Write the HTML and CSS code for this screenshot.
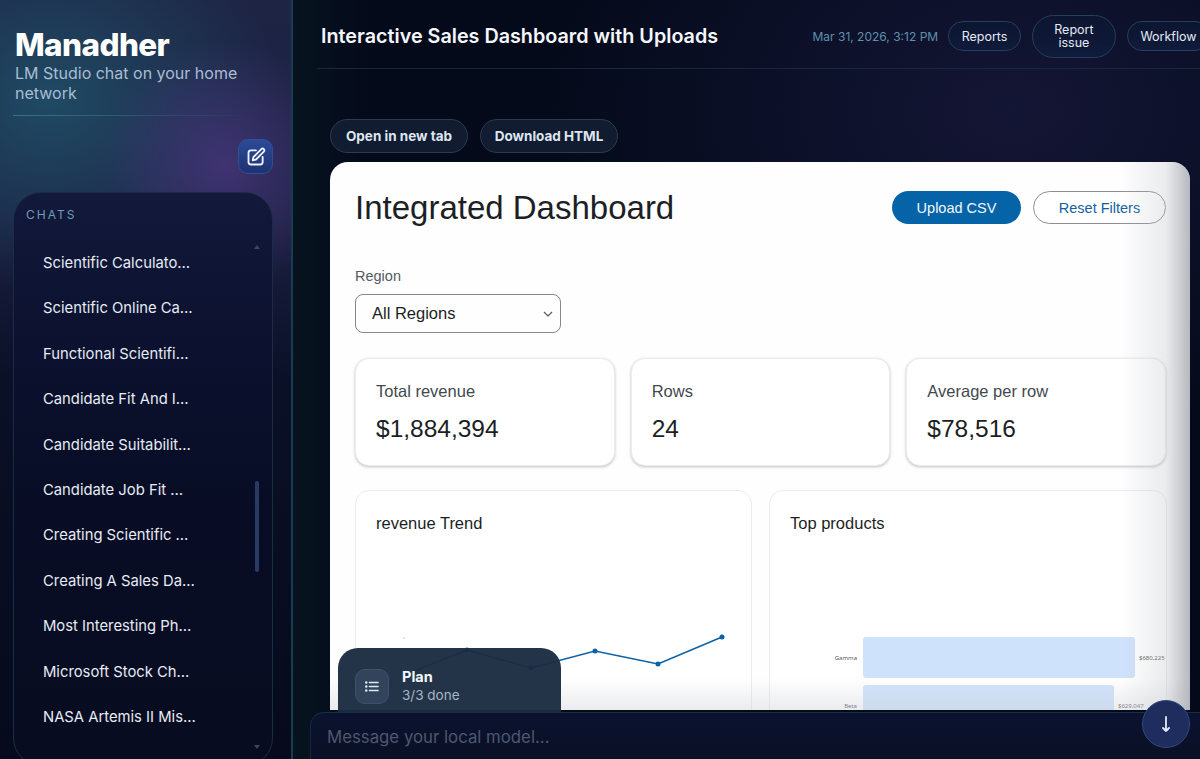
FILE: index.html
```html
<!DOCTYPE html>
<html lang="en">
<head>
    <meta charset="UTF-8">
    <meta name="viewport" content="width=device-width, initial-scale=1.0">
    <title>Manadher</title>
    <link rel="stylesheet" href="styles.css">
</head>
<body>
    <div class="app">
        <aside class="sidebar">
            <div class="brand">
                <h1 class="brand-name">Manadher</h1>
                <p class="brand-tag">LM Studio chat on your home network</p>
            </div>
            <div class="new-chat-row">
                <button class="new-chat" aria-label="New chat">
                    <svg width="20" height="20" viewBox="0 0 24 24" fill="none" stroke="currentColor" stroke-width="2.2" stroke-linecap="round" stroke-linejoin="round">
                        <path d="M12 4H6a3 3 0 0 0-3 3v11a3 3 0 0 0 3 3h11a3 3 0 0 0 3-3v-6"/>
                        <path d="M18.4 2.6a2.1 2.1 0 0 1 3 3L12 15l-4 1 1-4z"/>
                    </svg>
                </button>
            </div>
            <section class="chats">
                <h2 class="chats-label">CHATS</h2>
                <ul class="chat-list">
                    <li>Scientific Calculato…</li>
                    <li>Scientific Online Ca…</li>
                    <li>Functional Scientifi…</li>
                    <li>Candidate Fit And I…</li>
                    <li>Candidate Suitabilit…</li>
                    <li>Candidate Job Fit …</li>
                    <li>Creating Scientific …</li>
                    <li>Creating A Sales Da…</li>
                    <li>Most Interesting Ph…</li>
                    <li>Microsoft Stock Ch…</li>
                    <li>NASA Artemis II Mis…</li>
                </ul>
                <div class="scroll-up"></div>
                <div class="scroll-thumb"></div>
                <div class="scroll-down"></div>
            </section>
        </aside>

        <main class="main">
            <header class="topbar">
                <h2 class="page-title">Interactive Sales Dashboard with Uploads</h2>
                <div class="topbar-right">
                    <span class="timestamp">Mar 31, 2026, 3:12 PM</span>
                    <button class="pill">Reports</button>
                    <button class="pill pill-wrap">Report issue</button>
                    <button class="pill">Workflow</button>
                </div>
            </header>

            <div class="artifact">
                <div class="artifact-actions">
                    <button class="action">Open in new tab</button>
                    <button class="action">Download HTML</button>
                </div>
                <div class="preview">
                    <div class="dash-head">
                        <h1 class="dash-title">Integrated Dashboard</h1>
                        <div class="dash-buttons">
                            <button class="btn-primary">Upload CSV</button>
                            <button class="btn-outline">Reset Filters</button>
                        </div>
                    </div>
                    <label class="filter-label">Region</label>
                    <div class="filter-select">
                        <span>All Regions</span>
                        <svg width="10" height="6" viewBox="0 0 10 6" fill="none" stroke="#555" stroke-width="1.1"><path d="M1 1l4 4 4-4"/></svg>
                    </div>
                    <div class="kpis">
                        <div class="kpi">
                            <p class="kpi-label">Total revenue</p>
                            <p class="kpi-value">$1,884,394</p>
                        </div>
                        <div class="kpi">
                            <p class="kpi-label">Rows</p>
                            <p class="kpi-value">24</p>
                        </div>
                        <div class="kpi">
                            <p class="kpi-label">Average per row</p>
                            <p class="kpi-value">$78,516</p>
                        </div>
                    </div>
                    <div class="charts">
                        <div class="chart-card">
                            <h3 class="chart-title">revenue Trend</h3>
                            <svg class="trend" width="396" height="150" viewBox="0 0 396 150" fill="none">
                                <path d="M48 92v2" stroke="#c4c8ce"/>
                                <polyline points="48,130 111,105 175,123 239,106 302,119 366,92" stroke="#0a62a8" stroke-width="1.6"/>
                                <circle cx="111" cy="105" r="2.5" fill="#0a62a8"/>
                                <circle cx="175" cy="123" r="2.5" fill="#0a62a8"/>
                                <circle cx="239" cy="106" r="2.5" fill="#0a62a8"/>
                                <circle cx="302" cy="119" r="2.5" fill="#0a62a8"/>
                                <circle cx="366" cy="92" r="2.5" fill="#0a62a8"/>
                            </svg>
                        </div>
                        <div class="chart-card">
                            <h3 class="chart-title">Top products</h3>
                            <div class="bars">
                                <div class="bar-row">
                                    <span class="bar-name">Gamma</span>
                                    <div class="bar" style="width: 272px"></div>
                                    <span class="bar-value">$680,225</span>
                                </div>
                                <div class="bar-row">
                                    <span class="bar-name">Beta</span>
                                    <div class="bar" style="width: 251px"></div>
                                    <span class="bar-value">$629,047</span>
                                </div>
                            </div>
                        </div>
                    </div>
                </div>
            </div>

            <div class="plan">
                <div class="plan-icon">
                    <svg width="14" height="13" viewBox="0 0 16 14" fill="none" stroke="#dfe7f2" stroke-width="1.6" stroke-linecap="round">
                        <path d="M5 2.5h10M5 7h10M5 11.5h10"/>
                        <path d="M1.4 2.5h.1M1.4 7h.1M1.4 11.5h.1" stroke-width="2.8"/>
                    </svg>
                </div>
                <div>
                    <p class="plan-title">Plan</p>
                    <p class="plan-sub">3/3 done</p>
                </div>
            </div>
            <div class="composer">Message your local model...</div>
            <button class="to-bottom" aria-label="Scroll to bottom">
                <svg width="12" height="18" viewBox="0 0 12 18" fill="none" stroke="#e4ebf7" stroke-width="1.8" stroke-linecap="round" stroke-linejoin="round">
                    <path d="M6 2v14M3 13l3 3 3-3"/>
                </svg>
            </button>
        </main>
    </div>
</body>
</html>
```

FILE: styles.css
```css
* {
    box-sizing: border-box;
}
html, body {
    margin: 0;
    height: 100%;
    overflow: hidden;
}
body {
    font-family: Inter, "Noto Sans", sans-serif;
    background-color: #050a1b;
    color: #e8eef8;
}
h1, h2, h3, p, ul {
    margin: 0;
    padding: 0;
}
button {
    font-family: inherit;
    cursor: pointer;
}
.app {
    display: flex;
    height: 759px;
}

/* sidebar */
.sidebar {
    width: 293px;
    flex-shrink: 0;
    display: flex;
    flex-direction: column;
    padding: 27px 18px 3px 13px;
    border-right: 2px solid #1c3a50;
    background:
        radial-gradient(circle at 225px 165px, rgba(72, 54, 124, 0.8), rgba(72, 54, 124, 0) 125px),
        radial-gradient(ellipse 230px 190px at 50px 100px, rgba(32, 84, 108, 0.8), rgba(32, 84, 108, 0) 100%),
        linear-gradient(180deg, #1e2444 0%, #1c2143 28%, #0a1026 50%, #060a1c 100%);
}
.brand {
    padding: 0 0 12px 2px;
    margin-right: 20px;
    border-bottom: 1px solid;
    border-image: linear-gradient(90deg, #3a7186, rgba(58, 113, 134, 0)) 1;
}
.brand-name {
    font-size: 31.5px;
    font-weight: 800;
    line-height: 36px;
    letter-spacing: -0.6px;
    color: #fff;
}
.brand-tag {
    font-size: 16px;
    line-height: 20px;
    color: #a9bdd2;
}
.new-chat-row {
    display: flex;
    justify-content: flex-end;
    margin-top: 23px;
}
.new-chat {
    width: 35px;
    height: 35px;
    padding: 0;
    display: flex;
    align-items: center;
    justify-content: center;
    color: #eef3fb;
    border: 1px solid #30508f;
    border-radius: 10px;
    background: linear-gradient(180deg, #2b4a9a, #1f3272);
}
.chats {
    position: relative;
    flex: 1;
    margin-top: 18px;
    padding: 14px 12px;
    border: 1px solid #1b2c47;
    border-radius: 28px;
    background: linear-gradient(180deg, #13193a 0%, #0c1230 22%, #080d25 55%, #070c20 100%);
}
.chats-label {
    font-size: 12px;
    font-weight: 400;
    line-height: 16px;
    letter-spacing: 2px;
    color: #6d9db8;
}
.chat-list {
    list-style: none;
    margin-top: 29px;
    padding-left: 17px;
}
.chat-list li {
    height: 45.4px;
    line-height: 22px;
    font-size: 14.8px;
    white-space: nowrap;
    color: #e6ebf4;
}
/* scrollbar bits sit on top of the list */
.scroll-thumb {
    position: absolute;
    left: 241px;
    top: 288px;
    width: 4px;
    height: 91px;
    border-radius: 2px;
    background-color: #2a3a63;
}
.scroll-up, .scroll-down {
    position: absolute;
    left: 240px;
    width: 0;
    height: 0;
    border-left: 3px solid transparent;
    border-right: 3px solid transparent;
}
.scroll-up {
    top: 52px;
    border-bottom: 4px solid #3a4763;
}
.scroll-down {
    bottom: 16px;
    border-top: 4px solid #3a4763;
}

/* main column */
.main {
    position: relative;
    flex: 1;
    min-width: 0;
    overflow: hidden;
    background:
        radial-gradient(ellipse 460px 320px at 720px 110px, rgba(38, 36, 84, 0.45), rgba(38, 36, 84, 0) 100%),
        linear-gradient(90deg, #06141f 0%, #050a1b 8%);
}
.topbar {
    height: 69px;
    margin-left: 24px;
    padding-left: 4px;
    display: flex;
    align-items: center;
    justify-content: space-between;
    border-bottom: 1px solid #17283d;
}
.page-title {
    font-size: 19.75px;
    font-weight: 600;
    white-space: nowrap;
    color: #f4f7fc;
    padding-top: 4px;
}
.topbar-right {
    display: flex;
    align-items: center;
    gap: 11px;
    margin-right: -10px;
    padding-top: 4px;
}
.timestamp {
    font-size: 12px;
    margin-right: -1px;
    white-space: nowrap;
    color: #5f90ae;
}
.pill {
    height: 30px;
    padding: 0 12.5px;
    font-size: 12.5px;
    line-height: 13px;
    color: #e4eaf4;
    border: 1px solid #23405c;
    border-radius: 20px;
    background: linear-gradient(180deg, #0c1630, #101a3a);
}
.pill-wrap {
    width: 84px;
    height: 43px;
    border-radius: 22px;
}
.artifact {
    padding: 50px 10px 0 37px;
}
.artifact-actions {
    display: flex;
    gap: 12px;
    margin-bottom: 9px;
}
.action {
    height: 34px;
    width: 138px;
    padding: 0;
    font-size: 13.5px;
    font-weight: 700;
    color: #dfe6f1;
    border: 1px solid #2a3b52;
    border-radius: 17px;
    background-color: #111c30;
}

/* embedded dashboard */
.preview {
    position: relative;
    height: 548px;
    padding: 29px 24px 0 25px;
    overflow: hidden;
    border-radius: 18px 18px 0 0;
    background-color: #fefeff;
    font-family: "Liberation Sans", Arial, sans-serif;
    color: #1c1f24;
}
.preview::after {
    content: "";
    position: absolute;
    inset: 0;
    pointer-events: none;
    background:
        linear-gradient(270deg, rgba(170, 172, 178, 0.85) 0, rgba(190, 192, 198, 0.3) 24px, rgba(255, 255, 255, 0) 70px),
        linear-gradient(0deg, rgba(205, 207, 213, 0.4) 0, rgba(255, 255, 255, 0) 32px);
}
.dash-head {
    display: flex;
    align-items: flex-start;
    justify-content: space-between;
    height: 75px;
}
.dash-title {
    font-size: 33px;
    font-weight: 400;
    line-height: 34px;
}
.dash-buttons {
    display: flex;
    gap: 12px;
}
.btn-primary, .btn-outline {
    height: 33px;
    font-family: inherit;
    font-size: 14.5px;
    border-radius: 17px;
}
.btn-primary {
    width: 129px;
    color: #f4f8fc;
    border: none;
    background-color: #0563a8;
}
.btn-outline {
    width: 133px;
    color: #14609f;
    border: 1px solid #8d8f93;
    background-color: #fff;
}
.filter-label {
    display: block;
    font-size: 14.5px;
    line-height: 17px;
    color: #555a60;
    margin-top: 2px;
}
.filter-select {
    width: 206px;
    height: 39px;
    margin-top: 9px;
    padding: 0 7px 0 16px;
    display: flex;
    align-items: center;
    justify-content: space-between;
    font-size: 16.5px;
    border: 1px solid #85878b;
    border-radius: 8px;
}
.kpis {
    display: grid;
    grid-template-columns: 1fr 1fr 1fr;
    gap: 16px;
    margin-top: 25px;
}
.kpi, .chart-card {
    border: 1px solid #ececef;
    border-radius: 14px;
    background-color: #fff;
}
.kpi {
    height: 108px;
    padding: 23px 20px;
    box-shadow: 0 1px 3px rgba(30, 35, 50, 0.28);
}
.kpi-label {
    font-size: 16.5px;
    line-height: 18px;
    color: #44484e;
}
.kpi-value {
    margin-top: 14px;
    font-size: 24.5px;
    line-height: 30px;
}
.charts {
    display: grid;
    grid-template-columns: 397px 398px;
    gap: 17px;
    margin-top: 24px;
}
.chart-card {
    height: 260px;
    padding: 23px 20px;
}
.chart-title {
    font-size: 16.5px;
    font-weight: 400;
    line-height: 18px;
}
.trend {
    display: block;
    margin: 13px -20px 0;
}
.bars {
    margin: 105px -20px 0;
    display: flex;
    flex-direction: column;
    gap: 7px;
}
.bar-row {
    display: flex;
    align-items: center;
    height: 41px;
    font-family: "Noto Sans", sans-serif;
    font-size: 6px;
    color: #555a60;
}
.bar-name {
    width: 87px;
    text-align: right;
    margin-right: 6px;
}
.bar {
    height: 41px;
    border-radius: 3px;
    background-color: #cfe2fb;
}
.bar-value {
    margin-left: 4px;
}

/* floating bits over the preview */
.plan {
    position: absolute;
    left: 45px;
    top: 648px;
    width: 223px;
    height: 66px;
    padding: 10px 17px 0;
    display: flex;
    align-items: center;
    gap: 13px;
    border-radius: 20px 20px 0 0;
    background-color: rgba(26, 44, 66, 0.96);
}
.plan-icon {
    width: 34px;
    height: 35px;
    display: flex;
    align-items: center;
    justify-content: center;
    border: 1px solid #3f5169;
    border-radius: 10px;
    background-color: #32445c;
}
.plan-title {
    font-size: 14.5px;
    font-weight: 700;
    line-height: 18px;
    color: #f3f6fb;
}
.plan-sub {
    font-size: 13.5px;
    line-height: 19px;
    color: #a9b5c5;
}
.composer {
    position: absolute;
    left: 17px;
    right: 0;
    top: 712px;
    bottom: 0;
    padding: 13px 16px;
    font-size: 16.8px;
    line-height: 22px;
    color: #4d586e;
    border-top: 1px solid #17303f;
    border-left: 1px solid #15253c;
    border-radius: 14px 0 0 0;
    background: linear-gradient(180deg, #0b1230, #0a1024);
}
.to-bottom {
    position: absolute;
    left: 849px;
    top: 700px;
    width: 48px;
    height: 48px;
    padding: 0;
    display: flex;
    align-items: center;
    justify-content: center;
    border: 1px solid #2e4a7c;
    border-radius: 50%;
    background-color: #1e2c5e;
}
```
